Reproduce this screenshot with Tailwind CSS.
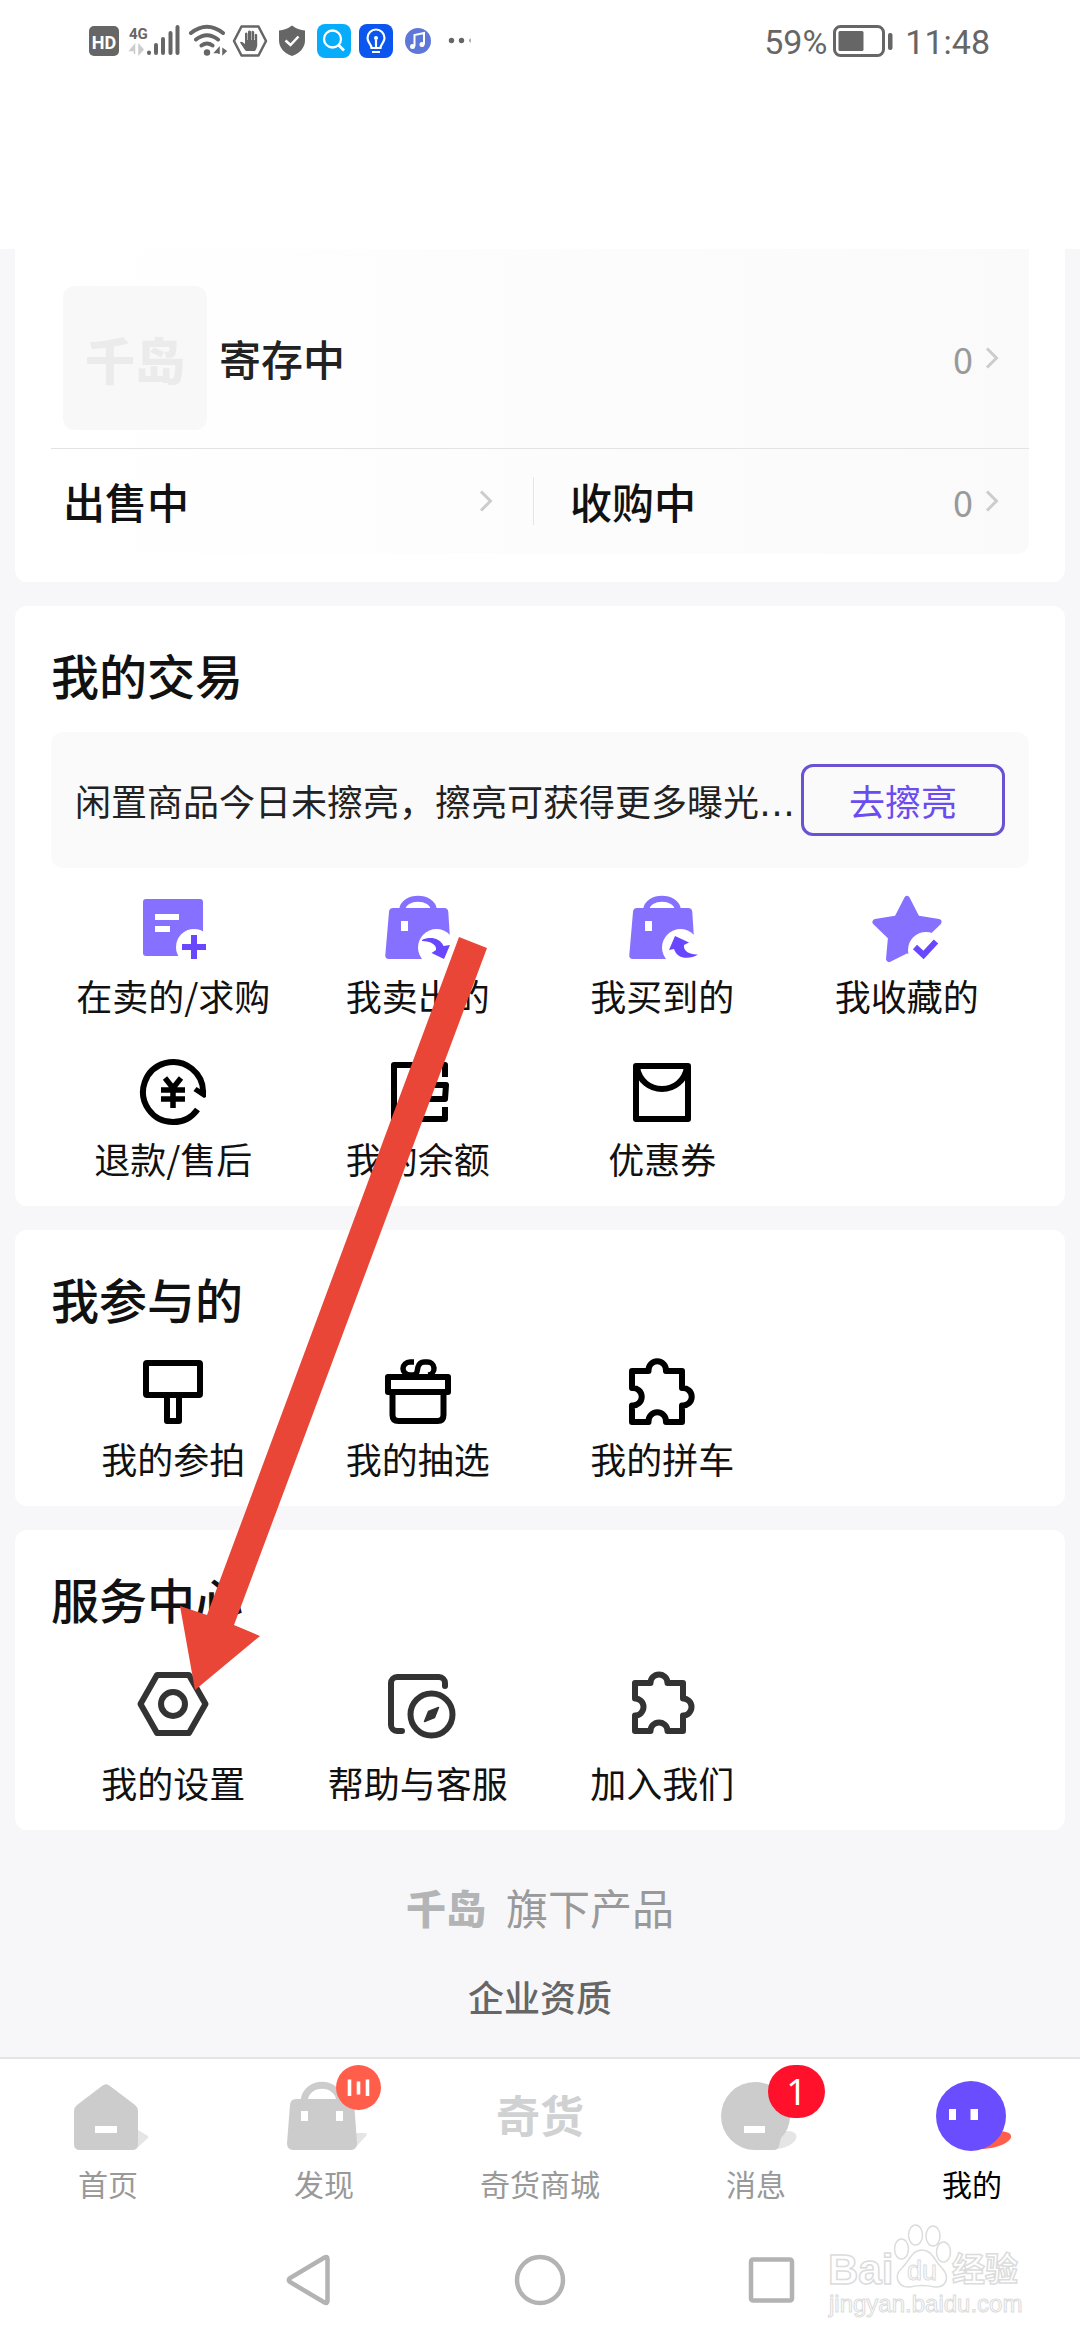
<!DOCTYPE html>
<html lang="zh-CN">
<head>
<meta charset="utf-8">
<meta name="viewport" content="width=device-width, initial-scale=1">
<title>我的</title>
<script src="https://cdn.jsdelivr.net/npm/@tailwindcss/browser@4"></script>
</head>
<body class="relative flex min-h-screen flex-col bg-white font-['Noto_Sans_CJK_SC',sans-serif] text-[#111]">

<svg class="hidden" aria-hidden="true">
  <symbol id="chevron" viewBox="0 0 14 22"><path d="M2 1.500L11.500 11L2 20.500" fill="none" stroke="#ccc" stroke-width="3"/></symbol>
  <symbol id="bag" viewBox="0 0 72 72">
    <path d="M20 17C22 2 50 2 52 17" fill="none" stroke="#8670ff" stroke-width="6"/>
    <path d="M11 15H62Q66 15 66.300 19L69 62Q69 66 65 66H7Q3 66 3.300 62L7 19Q7.300 15 11 15Z" fill="#8670ff"/>
    <rect x="19" y="28" width="7" height="10" fill="#fff"/>
    <circle cx="54.500" cy="54.500" r="18.500" fill="#fff"/>
  </symbol>
</svg>

<!-- status bar -->
<header class="flex items-center justify-between pt-6 pr-[90px] pb-[191px] pl-[88px] text-[#666]">
  <div class="flex h-[34px] items-center">
    <svg class="h-[34px] w-[400px]" viewBox="88 24 400 34" role="img" aria-label="信号与通知">
      <rect x="89" y="26" width="30" height="30" rx="5" fill="#666"/>
      <text x="104" y="48.500" text-anchor="middle" font-family="Roboto, sans-serif" font-weight="700" font-size="18" fill="#fff">HD</text>
      <text x="129" y="38.500" font-family="Roboto, sans-serif" font-weight="700" font-size="15" fill="#666">4G</text>
      <path d="M134.500 54V45L130 50.500H134M139 45V54L143 49.500Z" fill="#ccc" stroke="#ccc" stroke-width="1.500"/>
      <g stroke="#666" stroke-width="4" stroke-linecap="round"><path d="M149 52.500V53M156 45V53M163 39V53M170.500 33V53M177.500 27V53"/></g>
      <g fill="none" stroke="#666" stroke-width="4" stroke-linecap="round"><path d="M191 33Q207 20.500 223 33M196 39.500Q207 31 218 39.500M201.500 45.500Q207 41.500 212.500 45.500"/></g>
      <circle cx="207" cy="52.500" r="3.200" fill="#666"/>
      <path d="M219 54V48L215 52.500H219M223 49V54L226 51Z" fill="#666" stroke="#666" stroke-width="1.500"/>
      <path d="M241.500 26.500H258.500L266 41L258.500 55.500H241.500L234 41Z" fill="none" stroke="#666" stroke-width="2.500" stroke-linejoin="round"/>
      <path d="M245 50L240 42.500Q241 40.500 245 44V33.500Q246.300 31.500 247.500 33.500V40H248V31.500Q249.500 29.500 251 31.500V40H251.500V31.500Q253 30 254.200 32V40H254.800V34.500Q256.200 33 257.200 35V46Q256.500 49 255 51H246Z" fill="#666"/>
      <path d="M292 25.500Q298 30 305 30.500V40Q305 51 292 56Q279 51 279 40V30.500Q286 30 292 25.500Z" fill="#666"/>
      <path d="M285.500 40.500L290.500 45L298.500 36.500" fill="none" stroke="#fff" stroke-width="2.500"/>
      <rect x="317" y="24" width="34" height="34" rx="8" fill="#07adfb"/>
      <circle cx="332.500" cy="39" r="8.500" fill="none" stroke="#fff" stroke-width="2.300"/><path d="M338.500 45L344 50.500" stroke="#fff" stroke-width="2.800"/>
      <rect x="359" y="24" width="34" height="34" rx="8" fill="#0a56ee"/>
      <path d="M371.500 48C371.500 44 367.500 43 367.500 38A8.500 8.500 0 0 1 384.500 38C384.500 43 380.500 44 380.500 48ZM372 52H380M376 47V40" fill="none" stroke="#fff" stroke-width="2.200"/><circle cx="376" cy="38" r="2" fill="#fff"/>
      <circle cx="418" cy="41" r="13" fill="#5e78da"/>
      <path d="M414.500 46.500V35L424 33V44.500" fill="none" stroke="#fff" stroke-width="2"/><circle cx="412.500" cy="46.500" r="2.500" fill="#fff"/><circle cx="422" cy="44.500" r="2.500" fill="#fff"/>
      <circle cx="451.500" cy="40.500" r="2.700" fill="#666"/><circle cx="461.500" cy="40.500" r="2.700" fill="#666"/><path d="M470.500 38.300A2.700 2.700 0 0 0 470.500 42.700Z" fill="#666"/>
    </svg>
  </div>
  <div class="flex h-[34px] items-center font-['Roboto',sans-serif] text-[34px] leading-[34px]">
    <span class="pt-0.5">59%</span>
    <svg class="mr-3 ml-1.5 h-8 w-[60px]" viewBox="0 0 60 32" aria-hidden="true">
      <rect x="1.500" y="1.500" width="49" height="29" rx="6" fill="none" stroke="#666" stroke-width="3"/><rect x="5.500" y="6" width="25" height="20" rx="1.500" fill="#666"/><rect x="55" y="8" width="4.500" height="17" rx="2" fill="#666"/>
    </svg>
    <time class="pt-0.5">11:48</time>
  </div>
</header>

<main class="flex flex-col gap-6 bg-[#f7f7fa] px-[15px] pb-[37px]">

  <section class="rounded-b-xl bg-white px-9 pb-7">
    <div class="rounded-b-xl bg-linear-to-r from-white to-[#fafafa]">
      <a href="#deposit" class="flex items-center pt-[37px] pr-[30px] pb-[18px] pl-3">
        <span class="flex size-36 items-center justify-center rounded-xl bg-[#f8f8f8] text-[50px] leading-none font-black text-[#ebebeb]">千岛</span>
        <span class="ml-3 flex-1 text-[42px] leading-[60px] font-medium text-[#222]">寄存中</span>
        <span class="text-[36px] leading-[60px] text-[#999]">0</span>
        <svg class="ml-3 h-[22px] w-3.5"><use href="#chevron"/></svg>
      </a>
      <div class="grid grid-cols-[483fr_495fr] items-center border-t border-[#e3e3e3] pt-7 pb-[29px]">
        <a href="#selling" class="flex items-center justify-between border-r border-[#e5e5e5] pr-10 pl-3">
          <span class="text-[42px] leading-[48px] font-medium">出售中</span>
          <svg class="h-[22px] w-3.5"><use href="#chevron"/></svg>
        </a>
        <a href="#buying" class="flex items-center pr-[30px] pl-9">
          <span class="flex-1 text-[42px] leading-[48px] font-medium">收购中</span>
          <span class="text-[36px] leading-[48px] text-[#999]">0</span>
          <svg class="ml-3 h-[22px] w-3.5"><use href="#chevron"/></svg>
        </a>
      </div>
    </div>
  </section>

  <section class="rounded-xl bg-white px-9 pt-9 pb-6">
    <h2 class="text-[48px] leading-[64px] font-medium">我的交易</h2>
    <div class="mt-[26px] flex items-center justify-between rounded-xl bg-[#fafafa] px-6 py-8">
      <p class="text-[36px] leading-[72px] whitespace-nowrap text-[#222]">闲置商品今日未擦亮，擦亮可获得更多曝光<span class="font-['DejaVu_Sans',sans-serif] leading-none">…</span></p>
      <button type="button" class="h-[72px] w-[204px] shrink-0 rounded-xl border-3 border-[#6a52d3] text-[36px] leading-[60px] text-[#6a4cf0]">去擦亮</button>
    </div>
    <div class="mt-[25px] grid grid-cols-4 gap-y-[37px] text-[36px] leading-[48px]">
      <a href="#listing" class="flex flex-col items-center gap-1.5">
        <svg class="size-[72px]" viewBox="0 0 72 72"><rect x="6" y="6" width="60" height="57" rx="3" fill="#8670ff"/><path d="M18 24H42M18 36H33" stroke="#fff" stroke-width="6"/><circle cx="57" cy="54" r="18" fill="#fff"/><path d="M45 54H69M57 42V66" stroke="#6847ff" stroke-width="6"/></svg>
        <span>在卖的/求购</span>
      </a>
      <a href="#sold" class="flex flex-col items-center gap-1.5">
        <svg class="size-[72px]" viewBox="0 0 72 72"><use href="#bag"/><path d="M40 47C48 43 58 45 61.500 53L68 52L62 66L49.500 60L54 57C55 52 49 48 40 48Z" fill="#6847ff"/></svg>
        <span>我卖出的</span>
      </a>
      <a href="#bought" class="flex flex-col items-center gap-1.5">
        <svg class="size-[72px]" viewBox="0 0 72 72"><use href="#bag"/><path d="M49 43L63 49.500L58 52C57 58 64 62 72 61.500C63 67 51 66 48 56L43 57Z" fill="#6847ff"/></svg>
        <span>我买到的</span>
      </a>
      <a href="#favorites" class="flex flex-col items-center gap-1.5">
        <svg class="size-[72px]" viewBox="0 0 72 72"><path d="M36 6L46 25.500L67.500 29L51 45L55 66L36 57L18 66L20 44L4.500 29L26 25.500Z" fill="#8670ff" stroke="#8670ff" stroke-width="6" stroke-linejoin="round"/><circle cx="55" cy="57" r="18" fill="#fff"/><path d="M44 54L52.500 62L65 48.500" fill="none" stroke="#6847ff" stroke-width="6"/></svg>
        <span>我收藏的</span>
      </a>
      <a href="#refund" class="flex flex-col items-center gap-1.5">
        <svg class="size-[72px]" viewBox="0 0 72 72" fill="none" stroke="#000"><path d="M60.500 53.500A30 30 0 1 1 66 38" stroke-width="6"/><path d="M59.500 31L56.500 35L67 42L69 41V34L66 35Z" fill="#000" stroke="none"/><path d="M28 22L36 32L44 22M36 31V52M24 34H48M24 43H48" stroke-width="5.500"/></svg>
        <span>退款/售后</span>
      </a>
      <a href="#balance" class="flex flex-col items-center gap-1.5">
        <svg class="size-[72px]" viewBox="0 0 72 72" fill="none" stroke="#000" stroke-width="6" stroke-linejoin="round"><path d="M63 21V9H12V63H63V51M64 29H42V43H63Z"/></svg>
        <span>我的余额</span>
      </a>
      <a href="#coupons" class="flex flex-col items-center gap-1.5">
        <svg class="size-[72px]" viewBox="0 0 72 72" fill="none" stroke="#000" stroke-width="6" stroke-linejoin="round"><path d="M10 10H62V63H10ZM11 11C13 25 24 33 36 33S59 25 61 11"/></svg>
        <span>优惠券</span>
      </a>
    </div>
  </section>

  <section class="rounded-xl bg-white px-9 pt-9 pb-6">
    <h2 class="text-[48px] leading-[64px] font-medium">我参与的</h2>
    <div class="mt-[26px] grid grid-cols-4 text-[36px] leading-[48px]">
      <a href="#auction" class="flex flex-col items-center gap-1.5">
        <svg class="size-[72px]" viewBox="0 0 72 72" fill="none" stroke="#000" stroke-width="6" stroke-linejoin="round"><rect x="9" y="7" width="54" height="32" rx="1"/><path d="M30 39V65H42V39"/></svg>
        <span>我的参拍</span>
      </a>
      <a href="#lottery" class="flex flex-col items-center gap-1.5">
        <svg class="size-[72px]" viewBox="0 0 72 72" fill="none" stroke="#000" stroke-width="6" stroke-linejoin="round"><path d="M6 21H66V36H6ZM10.500 36V59Q10.500 65 16.500 65H55.500Q61.500 65 61.500 59V36"/><path d="M32 6H28A7 6.500 0 0 0 28 19H31C36 19 35 14 36 11C37 8 39 6 42 6H45A6.500 6.500 0 0 1 46 19" stroke-width="5.500"/></svg>
        <span>我的抽选</span>
      </a>
      <a href="#group" class="flex flex-col items-center gap-1.5">
        <svg class="size-[72px]" viewBox="0 0 72 72" fill="none" stroke="#000" stroke-width="6" stroke-linejoin="round"><path d="M6 15H22.500A8.800 8.800 0 1 1 40 15H56V32A8.800 8.800 0 1 1 56 49.500V66H40A8.800 8.800 0 1 0 22.500 66H6V49.500A8.800 8.800 0 1 0 6 32Z"/></svg>
        <span>我的拼车</span>
      </a>
    </div>
  </section>

  <section class="rounded-xl bg-white px-9 pt-9 pb-6">
    <h2 class="text-[48px] leading-[64px] font-medium">服务中心</h2>
    <div class="mt-[38px] grid grid-cols-4 text-[36px] leading-[48px]">
      <a href="#settings" class="flex flex-col items-center gap-[18px]">
        <svg class="size-[72px]" viewBox="0 0 72 72" fill="none" stroke="#333" stroke-width="6"><path d="M3.500 36L20 7H52L68.500 36L52 65H20Z" stroke-linejoin="round"/><circle cx="36" cy="36" r="12"/></svg>
        <span>我的设置</span>
      </a>
      <a href="#help" class="flex flex-col items-center gap-[18px]">
        <svg class="size-[72px] overflow-visible" viewBox="0 0 72 72" fill="none" stroke="#333" stroke-width="6" stroke-linecap="round"><path d="M63 18V15A6 6 0 0 0 57 9H15A6 6 0 0 0 9 15V57A6 6 0 0 0 15 63H20"/><circle cx="49.500" cy="46.500" r="21"/><path d="M42.500 53.500L46.500 43.500L56.500 39.500L52.500 49.500Z" fill="#333" stroke-width="1.500" stroke-linejoin="round"/></svg>
        <span>帮助与客服</span>
      </a>
      <a href="#join" class="flex flex-col items-center gap-[18px]">
        <svg class="size-[72px]" viewBox="0 0 72 72" fill="none" stroke="#333" stroke-width="6" stroke-linejoin="round"><path d="M9 15H24.500A8.500 8.500 0 0 1 41.500 15H57V30.500A8.500 8.500 0 0 1 57 47.500V63H41.500A8.500 8.500 0 0 0 24.500 63H9V47.500A8.500 8.500 0 0 0 9 30.500Z"/></svg>
        <span>加入我们</span>
      </a>
    </div>
  </section>

  <footer class="flex flex-col items-center gap-[35px] pt-[23px]">
    <p class="flex items-center gap-5 text-[42px] leading-[60px] text-[#999]"><strong class="text-[40px] font-black text-[#b3b4b6]">千岛</strong>旗下产品</p>
    <a href="#license" class="text-[36px] leading-[48px] font-medium text-[#666]">企业资质</a>
  </footer>
</main>

<nav class="grid grid-cols-5 border-t-2 border-[#e4e4e4] pt-[21px] text-[30px] leading-[42px] text-[#999]">
  <a href="#home" class="flex flex-col items-center gap-2.5">
    <svg class="size-[72px] overflow-visible" viewBox="0 0 72 72"><path d="M66 50L76 56Q77 57 76 58L64 69Z" fill="#e5e5e5"/><path d="M30 6Q34 2.500 38 6L63 25Q66 27.500 66 31V64Q66 70 60 70H8Q2 70 2 64V31Q2 27.500 5 25Z" fill="#ccc"/><rect x="23" y="46" width="22" height="7" fill="#fff"/></svg>
    <span>首页</span>
  </a>
  <a href="#discover" class="flex flex-col items-center gap-2.5">
    <span class="relative">
      <svg class="size-[72px] overflow-visible" viewBox="0 0 72 72"><path d="M66 53H77Q80 53 78 56L67 68Z" fill="#e5e5e5"/><path d="M16 21C18 0 50 0 52 21" fill="none" stroke="#ccc" stroke-width="7"/><path d="M8 19H60Q66 19 66.300 25L69 63Q69 70 63 70H5Q-1 70-1 63L2 25Q2.300 19 8 19Z" fill="#ccc"/><path d="M13 31H20V41H13ZM48 31H55V41H48Z" fill="#fff"/></svg>
      <svg class="absolute -top-[15px] left-12 size-[45px]" viewBox="0 0 45 45"><circle cx="22.500" cy="22.500" r="22.500" fill="#ff5e4b"/><path d="M13.500 14.500V31M22.500 16.500V29.500M31.500 14.500V31" stroke="#fff" stroke-width="3.600"/></svg>
    </span>
    <span>发现</span>
  </a>
  <a href="#mall" class="flex flex-col items-center gap-2.5">
    <span class="pb-1 text-[44px] leading-[68px] font-bold text-[#cfd1d2]">奇货</span>
    <span>奇货商城</span>
  </a>
  <a href="#messages" class="flex flex-col items-center gap-2.5">
    <span class="relative">
      <svg class="size-[72px] overflow-visible" viewBox="0 0 72 72"><ellipse cx="62" cy="60" rx="15" ry="8" transform="rotate(-18 62 60)" fill="#e5e5e5"/><path d="M35 2A35 34 0 0 1 70 36Q70 49 61 58L59 66Q58 70 54 70H35A34 34 0 0 1 35 2Z" fill="#ccc"/><rect x="24" y="46" width="21" height="7" fill="#fff"/></svg>
      <span class="absolute -top-[15px] left-12 flex h-[53px] w-[57px] items-center justify-center rounded-full bg-[#ff112b] font-['Noto_Sans',sans-serif] text-[36px] leading-none text-white">1</span>
    </span>
    <span>消息</span>
  </a>
  <a href="#me" aria-current="page" class="flex flex-col items-center gap-2.5 text-black">
    <svg class="size-[72px] overflow-visible" viewBox="0 0 72 72"><ellipse cx="55" cy="60" rx="20.500" ry="8" transform="rotate(-12 55 60)" fill="#ff5e4b"/><circle cx="35" cy="36" r="35" fill="#694dff"/><path d="M13 29H20V40H13ZM34.500 29H42V40H34.500Z" fill="#fff"/></svg>
    <span>我的</span>
  </a>
</nav>

<!-- system navigation -->
<div class="relative mt-12 flex justify-center gap-44 pb-8">
  <button type="button" aria-label="返回"><svg class="block size-14" viewBox="0 0 56 56"><path d="M44.500 5.500Q47.500 4 47.500 7V49Q47.500 52 44.500 50.500L10 30Q7.500 28 10 26Z" fill="none" stroke="#b3b3b3" stroke-width="4.500"/></svg></button>
  <button type="button" aria-label="主屏幕"><svg class="block size-14" viewBox="0 0 56 56"><circle cx="28" cy="28" r="23" fill="none" stroke="#b3b3b3" stroke-width="4.500"/></svg></button>
  <button type="button" aria-label="最近任务"><svg class="block size-14" viewBox="0 0 56 56"><rect x="7" y="7.500" width="41" height="41" rx="2" fill="none" stroke="#b3b3b3" stroke-width="4.500"/></svg></button>
  <svg class="absolute right-[50px] bottom-[14px] h-[110px] w-[210px]" viewBox="820 2216 210 110" fill="#fff" stroke="#dcdcdc" stroke-width="1.500">
    <text x="828" y="2284" font-family="Liberation Sans, sans-serif" font-weight="700" font-size="42">Bai</text>
    <ellipse cx="901.500" cy="2249" rx="7" ry="10"/><ellipse cx="915.500" cy="2235" rx="7" ry="10"/><ellipse cx="933" cy="2236" rx="7" ry="10"/><ellipse cx="943.500" cy="2252" rx="7" ry="10"/>
    <path d="M922 2250C932 2250 934 2260 941 2267C951 2277 946 2288 935 2287Q922 2284 910 2287C898 2288 893 2276 902 2268C910 2260 912 2250 922 2250Z"/>
    <text x="907" y="2280" font-family="Liberation Sans, sans-serif" font-size="27" stroke-width="1">du</text>
    <text x="952" y="2281" font-family="Noto Sans CJK SC, sans-serif" font-weight="700" font-size="33">经验</text>
    <text x="829" y="2312" font-family="Liberation Sans, sans-serif" font-size="24" stroke-width="1">jingyan.baidu.com</text>
  </svg>
</div>

<!-- pointer to the settings entry -->
<svg class="pointer-events-none absolute top-[937px] left-[180px] h-[753px] w-[307px]" viewBox="180 937 307 753" aria-hidden="true">
  <path d="M459 937L487 948L234 1625L260 1636L195 1690L180 1606L207 1615Z" fill="#e94637"/>
</svg>
</body>
</html>
